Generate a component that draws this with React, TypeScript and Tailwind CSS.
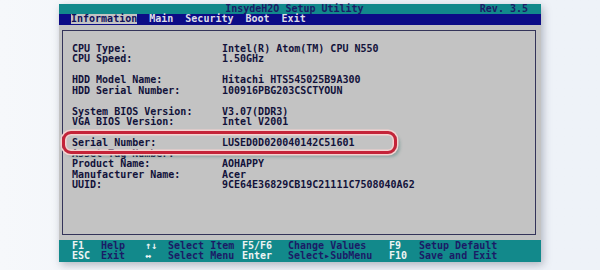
const rows: [string, string][] = [
  ["CPU Type:", "Intel(R) Atom(TM) CPU N550"],
  ["CPU Speed:", "1.50GHz"],
  ["", ""],
  ["HDD Model Name:", "Hitachi HTS545025B9A300"],
  ["HDD Serial Number:", "100916PBG203CSCTYOUN"],
  ["", ""],
  ["System BIOS Version:", "V3.07(DDR3)"],
  ["VGA BIOS Version:", "Intel V2001"],
  ["", ""],
  ["Serial Number:", "LUSED0D020040142C51601"],
  ["Asset Tag Number:", ""],
  ["Product Name:", "AOHAPPY"],
  ["Manufacturer Name:", "Acer"],
  ["UUID:", "9CE64E36829CB19C21111C7508040A62"],
];

const keys: [string, string, string, string, string, string, string, string][] = [
  ["F1", "Help", "↑↓", "Select Item", "F5/F6", "Change Values", "F9", "Setup Default"],
  ["ESC", "Exit", "↔", "Select Menu", "Enter", "Select▸SubMenu", "F10", "Save and Exit"],
];

export default function App() {
  return (
    <div className="relative h-[270px] w-[600px] overflow-hidden bg-gradient-to-r from-[#f6f8fb] via-[#eef2f8] to-[#eef2f8] pt-[4px] font-['DejaVu_Sans_Mono',monospace] text-[10px] font-bold leading-[10px]">
      <div className="ml-[59px] w-[482px] bg-[#c3c3c3] shadow-[2px_3px_8px_rgba(60,70,90,0.35)]">
        {/* title bar */}
        <div className="flex h-[10px] items-center bg-[#12898b] pr-[13px] text-[#1b1b66]">
          <span className="flex-1 text-center pl-[50px]">InsydeH2O Setup Utility</span>
          <span>Rev. 3.5</span>
        </div>

        {/* menu bar */}
        <div className="flex h-[11px] items-start gap-[12px] bg-[#0c0c86] pl-[12px] text-[#dcdce8]">
          <span className="bg-[#c3c3c3] text-[#10105a]">Information</span>
          <span>Main</span>
          <span>Security</span>
          <span>Boot</span>
          <span>Exit</span>
        </div>

        {/* info panel */}
        <div className="px-[3px] pt-[5px] pb-[5px] pr-[5px]">
          <div className="h-[205px] border border-[#34345a] pl-[9px] pt-[12.5px] text-[#12123a]">
            {rows.map(([label, value], i) => (
              <div key={i} className="flex h-[10.5px] leading-[10.5px] whitespace-pre">
                <span className="w-[150px]">{label}</span>
                <span>{value}</span>
              </div>
            ))}
          </div>
        </div>

        {/* footer */}
        <div className="h-[22px] bg-[#12898b] pl-[13px] pt-[1px]">
          {keys.map((r, i) => (
            <div key={i} className="flex h-[10px] whitespace-pre">
              <span className="w-[29px] text-[#eef4f4]">{r[0]}</span>
              <span className="w-[44px] text-[#1b1b66]">{r[1]}</span>
              <span className="w-[23px] text-[#eef4f4]">{r[2]}</span>
              <span className="w-[74px] text-[#1b1b66]">{r[3]}</span>
              <span className="w-[46px] text-[#eef4f4]">{r[4]}</span>
              <span className="w-[101px] text-[#1b1b66]">{r[5]}</span>
              <span className="w-[30px] text-[#eef4f4]">{r[6]}</span>
              <span className="text-[#1b1b66]">{r[7]}</span>
            </div>
          ))}
        </div>
      </div>

      {/* highlight annotation */}
      <div className="absolute left-[62px] top-[131px] h-[23px] w-[335px] rounded-[9px] border-[3px] border-[#c42439] shadow-[0_0_0_1.5px_#f6d2d0,inset_0_0_0_1.5px_#f6d2d0,3px_3px_3px_rgba(40,110,100,0.35)]" />
    </div>
  );
}
